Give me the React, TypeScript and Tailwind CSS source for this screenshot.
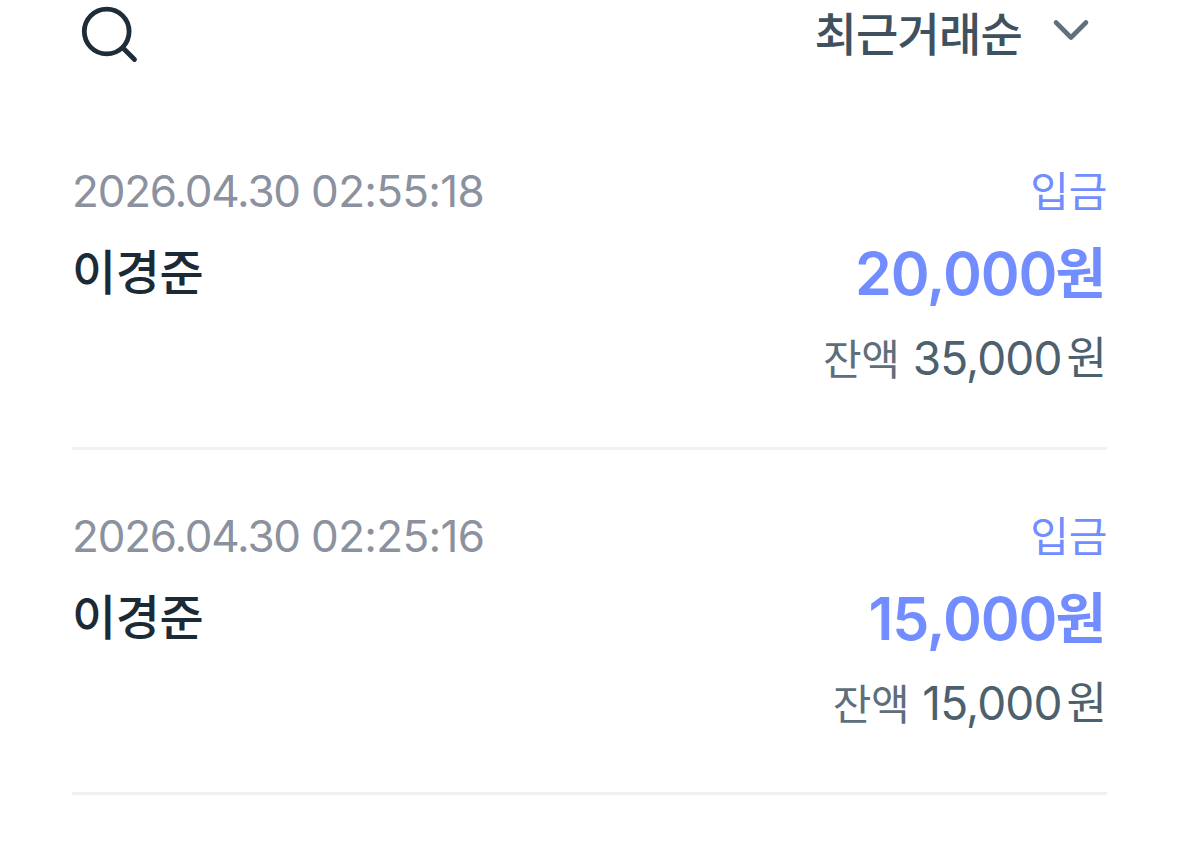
type Transaction = {
    date: string
    time: string
    name: string
    type: string
    amount: string
    balance: string
}

const transactions: Transaction[] = [
    { date: "2026.04.30", time: "02:55:18", name: "이경준", type: "입금", amount: "20,000", balance: "35,000" },
    { date: "2026.04.30", time: "02:25:16", name: "이경준", type: "입금", amount: "15,000", balance: "15,000" },
]

function TransactionRow({ item }: { item: Transaction }) {
    return (
        <li className="flex h-[345px] justify-between border-b-3 border-[#f1f1f3] pt-[56px] whitespace-nowrap">
            <div>
                <p className="h-[60px] text-[44px] leading-[60px] tracking-[-1.2px] text-[#8b919e]">
                    {item.date} <span className="tracking-[-0.7px]">{item.time}</span>
                </p>
                <p className="mt-[22px] h-[60px] text-[48px] leading-[60px] font-medium tracking-[-0.4px] text-[#1c2a36]">{item.name}</p>
            </div>
            <div className="text-right">
                <p className="mt-px h-[60px] text-[42px] leading-[60px] tracking-[-0.3px] text-[#728dff]">{item.type}</p>
                <p className="mt-[21px] mr-px h-[60px] text-[59px] leading-[60px] font-semibold text-[#728dff]">
                    <span className="tracking-[-1.1px]">{item.amount}</span>
                    <span className="-ml-px align-[2px] text-[55px]">원</span>
                </p>
                <p className="mt-[25px] h-[60px] text-[46px] leading-[60px] text-[#4c606e]">
                    <span className="text-[42px] tracking-[-0.3px] text-[#5e6e7b]">잔액</span>{" "}
                    <span className="tracking-[-0.9px]">{item.balance}</span>
                    <span className="ml-[5px] align-[1px] text-[44px]">원</span>
                </p>
            </div>
        </li>
    )
}

export default function App() {
    return (
        <main className="h-[858px] overflow-hidden bg-white px-[72px] font-['Inter','Noto_Sans_CJK_KR',sans-serif]">
            {/* Toolbar */}
            <header className="flex h-[105px] items-start justify-between">
                <button type="button" aria-label="검색" className="mt-1 ml-1.5">
                    <svg width="62" height="62" viewBox="0 0 62 62" fill="none" stroke="#1e2d39" strokeWidth="4.8">
                        <circle cx="28.7" cy="27.5" r="22.4" />
                        <path d="M45 44L56.5 55.5" strokeLinecap="round" />
                    </svg>
                </button>
                <button type="button" className="mr-[17px] flex items-start gap-[30px] text-[#3f515e]">
                    <span className="-mt-px h-[70px] text-[46px] leading-[70px] font-medium tracking-[-0.8px]">최근거래순</span>
                    <svg className="mt-[17px]" width="38" height="26" viewBox="0 0 38 26" fill="none" stroke="#5f7080" strokeWidth="4.6">
                        <path d="M4 5.5L19 20.5L34 5.5" strokeLinecap="round" strokeLinejoin="round" />
                    </svg>
                </button>
            </header>

            {/* Transaction list */}
            <ul>
                {transactions.map((item) => (
                    <TransactionRow key={item.time} item={item} />
                ))}
            </ul>
        </main>
    )
}
